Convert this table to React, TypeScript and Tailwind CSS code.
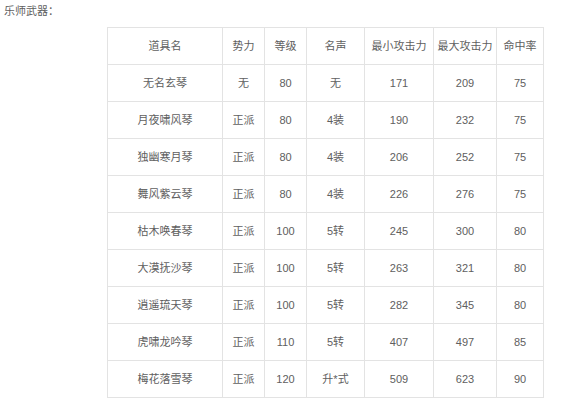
const rows: string[][] = [
  ["无名玄琴", "无", "80", "无", "171", "209", "75"],
  ["月夜啸风琴", "正派", "80", "4装", "190", "232", "75"],
  ["独幽寒月琴", "正派", "80", "4装", "206", "252", "75"],
  ["舞风紫云琴", "正派", "80", "4装", "226", "276", "75"],
  ["枯木唤春琴", "正派", "100", "5转", "245", "300", "80"],
  ["大漠抚沙琴", "正派", "100", "5转", "263", "321", "80"],
  ["逍遥琉天琴", "正派", "100", "5转", "282", "345", "80"],
  ["虎啸龙吟琴", "正派", "110", "5转", "407", "497", "85"],
  ["梅花落雪琴", "正派", "120", "升*式", "509", "623", "90"],
];

const head = ["道具名", "势力", "等级", "名声", "最小攻击力", "最大攻击力", "命中率"];
const widths = [115, 42, 42, 58, 69, 63, 47];

export default function App() {
  return (
    <div className="w-[568px] h-[400px] overflow-hidden bg-white text-[11px] text-[#606060] font-['Liberation_Sans','Noto_Sans_CJK_SC',sans-serif]">
      <p className="pl-[4px] pt-[2px] leading-[18px]">乐师武器：</p>
      <table className="ml-[107px] mt-[7px] table-fixed border-collapse border border-[#e3e3e3] w-[437px]">
        <colgroup>
          {widths.map((w, i) => (
            <col key={i} style={{ width: w }} />
          ))}
        </colgroup>
        <thead>
          <tr className="h-[37px]">
            {head.map((h) => (
              <th key={h} className="border border-[#e3e3e3] font-normal text-center p-0">
                {h}
              </th>
            ))}
          </tr>
        </thead>
        <tbody>
          {rows.map((r, i) => (
            <tr key={i} className="h-[37px]">
              {r.map((c, j) => (
                <td key={j} className="border border-[#e3e3e3] text-center p-0">
                  {c}
                </td>
              ))}
            </tr>
          ))}
        </tbody>
      </table>
    </div>
  );
}
